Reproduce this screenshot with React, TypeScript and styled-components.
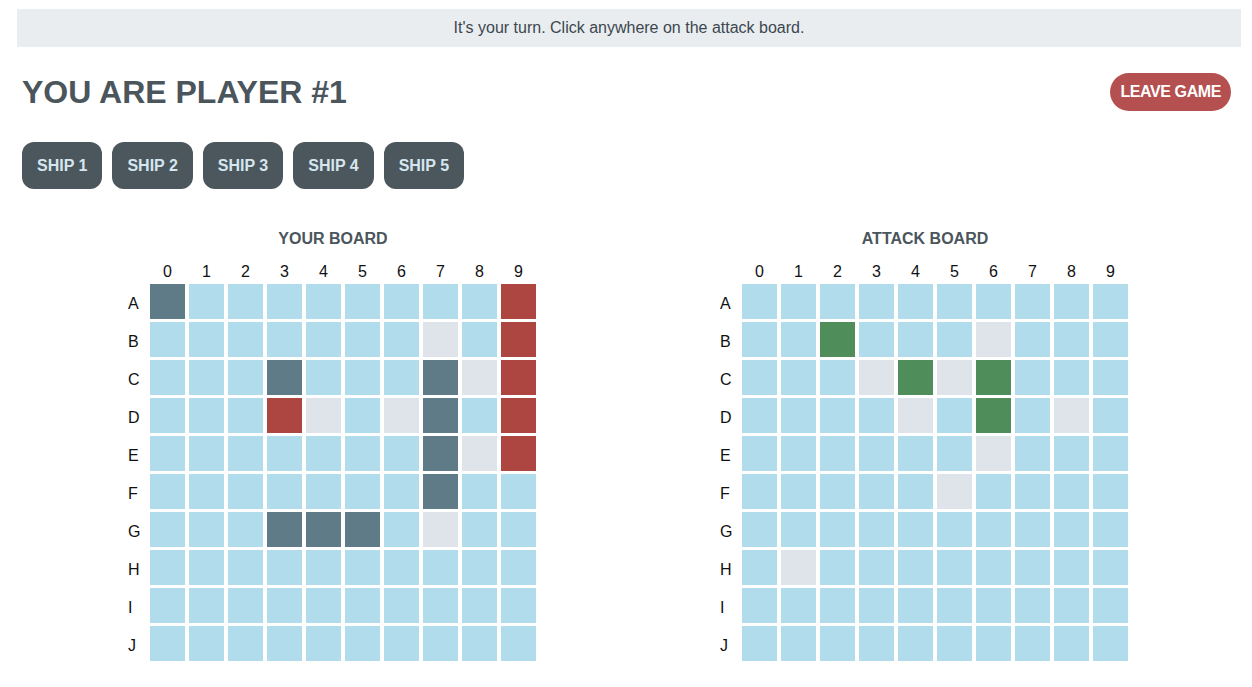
import React from 'react';
import styled, { createGlobalStyle } from 'styled-components';

type CellState = 'empty' | 'ship' | 'hit' | 'miss' | 'sunk';

const ROWS = ['A', 'B', 'C', 'D', 'E', 'F', 'G', 'H', 'I', 'J'];
const COLS = [0, 1, 2, 3, 4, 5, 6, 7, 8, 9];

// s = ship, x = hit, o = miss, g = hit on enemy
const parse = (rows: string[]): CellState[][] =>
  rows.map((r) =>
    r.split('').map((c) => {
      if (c === 's') return 'ship';
      if (c === 'x') return 'hit';
      if (c === 'o') return 'miss';
      if (c === 'g') return 'sunk';
      return 'empty';
    })
  );

const yourBoard = parse([
  's........x',
  '.......o.x',
  '...s...sox',
  '...xo.os.x',
  '.......sox',
  '.......s..',
  '...sss.o..',
  '..........',
  '..........',
  '..........',
]);

const attackBoard = parse([
  '..........',
  '..g...o...',
  '...ogog...',
  '....o.g.o.',
  '......o...',
  '.....o....',
  '..........',
  '.o........',
  '..........',
  '..........',
]);

const ships = ['SHIP 1', 'SHIP 2', 'SHIP 3', 'SHIP 4', 'SHIP 5'];

const GlobalStyle = createGlobalStyle`
  body {
    margin: 0;
    background: #fff;
    font-family: "Liberation Sans", Arial, Helvetica, sans-serif;
  }
`;

const App = () => {
  return (
    <Page>
      <GlobalStyle />
      <Banner>It's your turn. Click anywhere on the attack board.</Banner>
      <Main>
        <Header>
          <Title>YOU ARE PLAYER #1</Title>
          <LeaveButton>LEAVE GAME</LeaveButton>
        </Header>
        <ShipRow>
          {ships.map((s) => (
            <ShipButton key={s}>{s}</ShipButton>
          ))}
        </ShipRow>
        <Boards>
          <Board title="YOUR BOARD" cells={yourBoard} />
          <Board title="ATTACK BOARD" cells={attackBoard} />
        </Boards>
      </Main>
    </Page>
  );
};

const Board = ({ title, cells }: { title: string; cells: CellState[][] }) => (
  <BoardWrap>
    <BoardTitle>{title}</BoardTitle>
    <Grid>
      <span />
      {COLS.map((c) => (
        <ColLabel key={c}>{c}</ColLabel>
      ))}
      {ROWS.map((r, ri) => (
        <React.Fragment key={r}>
          <RowLabel>{r}</RowLabel>
          {cells[ri].map((state, ci) => (
            <Cell key={ci} $state={state} />
          ))}
        </React.Fragment>
      ))}
    </Grid>
  </BoardWrap>
);

const Page = styled.div`
  padding: 9px 11px 0 17px;
`;

const Banner = styled.div`
  height: 38px;
  line-height: 38px;
  background: #e9edf0;
  color: #3c474f;
  font-size: 16px;
  text-align: center;
`;

const Main = styled.div`
  padding: 0 10px 0 5px;
`;

const Header = styled.div`
  margin-top: 26px;
  height: 38px;
  display: flex;
  align-items: center;
  justify-content: space-between;
`;

const Title = styled.h1`
  margin: 0;
  font-size: 32px;
  line-height: 38px;
  font-weight: bold;
  color: #4a555c;
`;

const LeaveButton = styled.button`
  height: 38px;
  padding: 0 10px;
  border: none;
  border-radius: 19px;
  background: #b55050;
  color: #fff;
  font-family: inherit;
  font-size: 16px;
  font-weight: bold;
  letter-spacing: -0.4px;
  cursor: pointer;
`;

const ShipRow = styled.div`
  margin-top: 31px;
  display: flex;
  gap: 10px;
`;

const ShipButton = styled.button`
  height: 47px;
  padding: 0 15px;
  border: none;
  border-radius: 12px;
  background: #4b565d;
  color: #d5e6ef;
  font-family: inherit;
  font-size: 16px;
  font-weight: bold;
  cursor: pointer;
`;

const Boards = styled.div`
  margin-top: 41px;
  padding-left: 94px;
  display: flex;
  gap: 172px;
`;

const BoardWrap = styled.div`
  display: flex;
  flex-direction: column;
`;

const BoardTitle = styled.div`
  padding-left: 14px;
  margin-bottom: 15px;
  text-align: center;
  font-size: 16px;
  line-height: 18px;
  font-weight: bold;
  color: #4a555c;
`;

const Grid = styled.div`
  display: grid;
  grid-template-columns: 30px repeat(10, 35px);
  grid-template-rows: 18px repeat(10, 35px);
  column-gap: 4px;
  row-gap: 3px;
`;

const ColLabel = styled.div`
  text-align: center;
  font-size: 16px;
  line-height: 18px;
  color: #111;
`;

const RowLabel = styled.div`
  padding: 4px 0 0 12px;
  display: flex;
  align-items: center;
  font-size: 16px;
  color: #111;
`;

const cellColors: Record<CellState, string> = {
  empty: '#b1dcec',
  ship: '#5f7b87',
  hit: '#ad4641',
  miss: '#dfe4ea',
  sunk: '#4f8d5a',
};

const Cell = styled.div<{ $state: CellState }>`
  background: ${({ $state }) => cellColors[$state]};
`;

export default App;
